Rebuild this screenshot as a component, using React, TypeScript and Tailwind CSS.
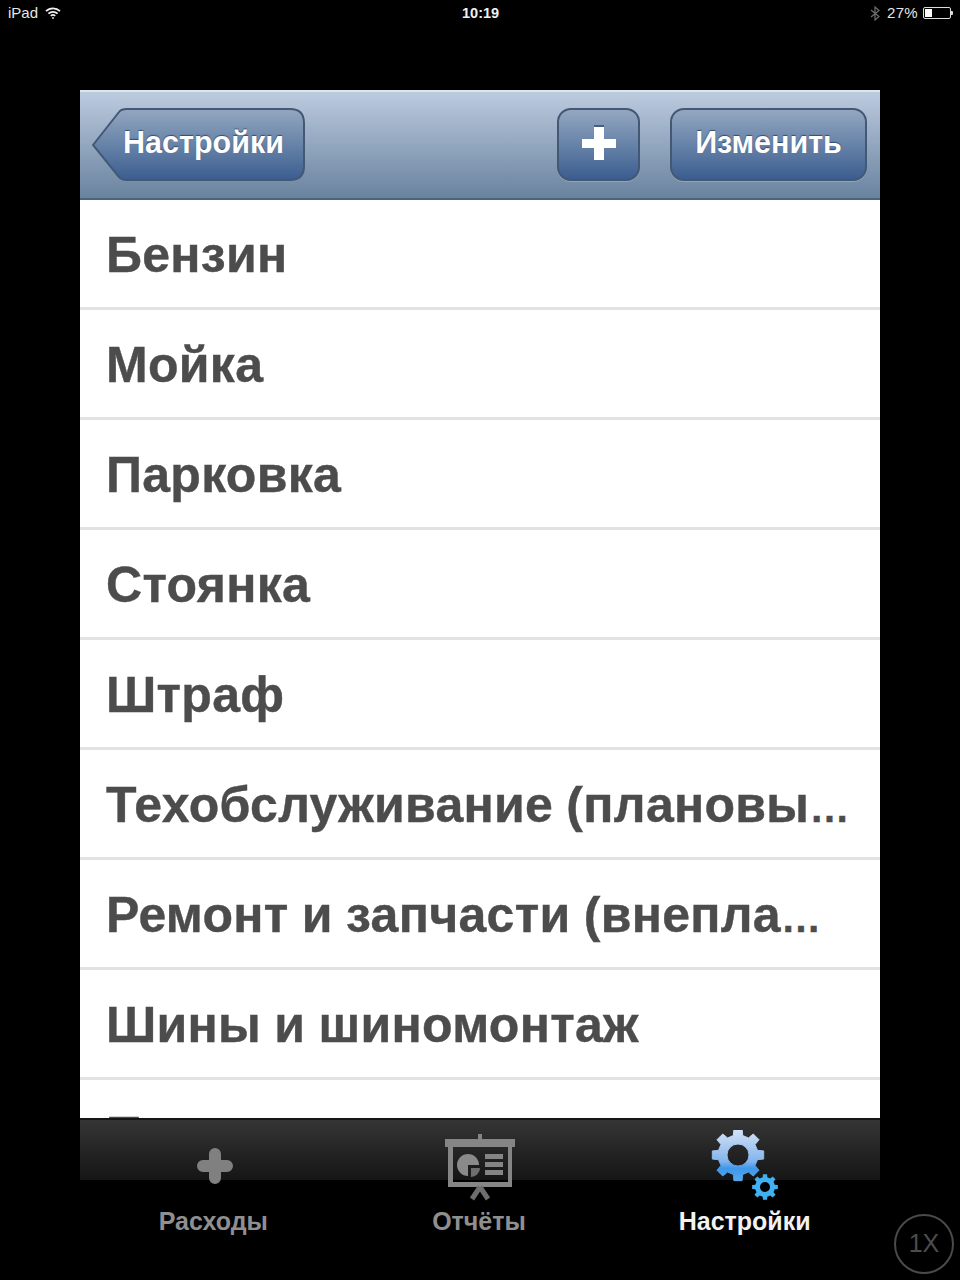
const rows = [
  "Бензин",
  "Мойка",
  "Парковка",
  "Стоянка",
  "Штраф",
  "Техобслуживание (плановы…",
  "Ремонт и запчасти (внепла…",
  "Шины и шиномонтаж",
  "Прочее",
];

// builds a cog outline, hole is cut with evenodd
function gearPath(cx: number, cy: number, outer: number, inner: number, hole: number, teeth: number) {
  const pts: string[] = [];
  const step = (Math.PI * 2) / teeth;
  for (let i = 0; i < teeth; i++) {
    const a = i * step - Math.PI / 2;
    const w = step * 0.2;
    const w2 = step * 0.3;
    const p = (r: number, t: number) => `${(cx + r * Math.cos(t)).toFixed(2)} ${(cy + r * Math.sin(t)).toFixed(2)}`;
    pts.push(p(inner, a - w2), p(outer, a - w), p(outer, a + w), p(inner, a + w2));
  }
  const ring = `M${cx - hole} ${cy}a${hole} ${hole} 0 1 0 ${hole * 2} 0a${hole} ${hole} 0 1 0 ${-hole * 2} 0Z`;
  return `M${pts.join("L")}Z${ring}`;
}

function StatusBar() {
  return (
    <div className="relative flex h-[26px] items-center justify-between pl-[8px] pr-[7px] text-[15px] text-[#e6e6e6]">
      <div className="flex items-center gap-[7px]">
        <span>iPad</span>
        <svg width="16" height="12" viewBox="0 0 16 12" fill="none" stroke="#f0f0f0" strokeWidth="1.7">
          <path d="M1 4.2a10 10 0 0 1 14 0" />
          <path d="M3.4 6.7a6.6 6.6 0 0 1 9.2 0" />
          <path d="M5.8 9a3.2 3.2 0 0 1 4.4 0" />
          <circle cx="8" cy="11" r="0.9" fill="#f0f0f0" stroke="none" />
        </svg>
      </div>
      <span className="absolute left-[462px] top-[4px] text-[14.5px] font-bold leading-[18px] text-[#f0f0f0]">10:19</span>
      <div className="flex items-center">
        <svg className="mr-[7px]" width="10" height="15" viewBox="0 0 10 15" fill="none" stroke="#6e6e6e" strokeWidth="1.2">
          <path d="M1 4l8 6.5-4 3.5V1l4 3.5L1 11" />
        </svg>
        <span className="mr-[5px] tracking-[0.3px]">27%</span>
        <div className="flex items-center">
          <div className="h-[12px] w-[28px] rounded-[2px] border border-[#dcdcdc] p-[1px]">
            <div className="h-full w-[7px] bg-white" />
          </div>
          <div className="h-[4px] w-[2px] rounded-r-[1px] bg-[#dcdcdc]" />
        </div>
      </div>
    </div>
  );
}

function BackButton() {
  return (
    <div className="relative flex h-[74px] w-[214px] items-center justify-end pb-[5px] pr-[22px]">
      <svg className="absolute inset-0" width="214" height="74" viewBox="0 0 214 74">
        <defs>
          <linearGradient id="btnBack" x1="0" y1="0" x2="0" y2="1">
            <stop offset="0" stopColor="#94a7c1" />
            <stop offset="0.5" stopColor="#6783a8" />
            <stop offset="1" stopColor="#3b5d8f" />
          </linearGradient>
        </defs>
        <path
          d="M1 37L27 4Q29 1 35 1H198Q212 1 212 15V58Q212 72 198 72H35Q29 72 27 69Z"
          fill="url(#btnBack)"
          stroke="#435874"
          strokeWidth="2"
        />
      </svg>
      <span className="relative text-[30.5px] font-bold leading-none text-white [text-shadow:0_-1px_1px_rgba(30,50,80,0.7)]">
        Настройки
      </span>
    </div>
  );
}

function NavButton({ className, children }: { className: string; children: React.ReactNode }) {
  return (
    <div
      className={`flex h-[73px] items-center justify-center rounded-[14px] border-2 border-[#435874] bg-gradient-to-b from-[#94a7c1] via-[#6783a8] to-[#3b5d8f] shadow-[0_1px_0_rgba(255,255,255,0.2)] ${className}`}
    >
      {children}
    </div>
  );
}

function PlusIcon() {
  return (
    <svg width="44" height="44" viewBox="0 0 44 44">
      <path d="M5 17h12V5h10v12h12v9H27v12H17V26H5Z" fill="#fff" />
      <path d="M17 3h10v2H17Z" fill="#34496a" opacity="0.7" />
    </svg>
  );
}

function Row({ label }: { label: string }) {
  const cut = label.endsWith("…");
  return (
    <div className="flex h-[110px] shrink-0 items-center border-b-[3px] border-[#e2e2e2] pl-[26px]">
      <span className="whitespace-nowrap pt-[3px] text-[50px] font-bold leading-[60px] tracking-[0.3px] text-[#4c4c4c] [word-spacing:-1px] [-webkit-text-stroke:0.4px_#4c4c4c]">
        {cut ? label.slice(0, -1) : label}
        {cut && <span className="text-[40px] leading-none">…</span>}
      </span>
    </div>
  );
}

function ExpensesIcon() {
  return (
    <svg width="36" height="36" viewBox="0 0 36 36">
      <path
        d="M12 6a6 6 0 0 1 12 0v6h6a6 6 0 0 1 0 12h-6v6a6 6 0 0 1-12 0v-6H6a6 6 0 0 1 0-12h6Z"
        fill="#808080"
      />
    </svg>
  );
}

function ReportsIcon() {
  return (
    <svg width="72" height="68" viewBox="0 0 72 68" fill="#858585">
      <rect x="34" y="0" width="4" height="6" />
      <rect x="1" y="5" width="70" height="8" />
      <path fillRule="evenodd" d="M4 13h64v40H4ZM9 13v35h55V13Z" />
      <circle cx="24" cy="31" r="11" fill="#8a8a8a" />
      <path d="M24 31h12a12 12 0 0 1-12 12Z" fill="#1c1c1c" />
      <path d="M27 34h9a9 9 0 0 1-9 9Z" fill="#6e6e6e" />
      <rect x="41" y="20" width="18" height="5" />
      <rect x="41" y="28" width="18" height="5" />
      <rect x="41" y="36" width="18" height="5" />
      <path d="M36 53l-8 12M36 53l8 12" stroke="#6e6e6e" strokeWidth="5" fill="none" />
    </svg>
  );
}

function SettingsIcon() {
  return (
    <svg width="72" height="72" viewBox="0 0 72 72">
      <defs>
        <linearGradient id="gearBig" x1="0" y1="0" x2="0" y2="1">
          <stop offset="0" stopColor="#d4e3f7" />
          <stop offset="0.62" stopColor="#84b4ec" />
          <stop offset="0.76" stopColor="#3f97ea" />
          <stop offset="1" stopColor="#58a8ec" />
        </linearGradient>
      </defs>
      <path d={gearPath(27, 25, 26, 20, 11, 8)} fill="url(#gearBig)" fillRule="evenodd" stroke="url(#gearBig)" strokeLinejoin="round" strokeWidth="1" />
      <path d={gearPath(54, 57, 13, 10, 5, 8)} fill="#3fb0f2" fillRule="evenodd" />
    </svg>
  );
}

function TabBar() {
  return (
    <div className="relative h-[162px] shrink-0">
      <div className="absolute inset-x-0 top-0 h-[62px] border-t-2 border-[#151515] bg-gradient-to-b from-[#353535] to-[#161616]" />
      <div className="relative grid h-full grid-cols-3 text-[25px] font-bold">
        <div className="flex flex-col items-center">
          <div className="flex h-[84px] items-end pb-[18px] pl-[4px]">
            <ExpensesIcon />
          </div>
          <span className="mt-[5px] leading-[28px] text-[#8f8f8f]">Расходы</span>
        </div>
        <div className="flex flex-col items-center">
          <div className="flex h-[84px] items-end">
            <ReportsIcon />
          </div>
          <span className="mt-[5px] pr-[2px] leading-[28px] text-[#8f8f8f]">Отчёты</span>
        </div>
        <div className="flex flex-col items-center">
          <div className="flex h-[84px] items-end">
            <SettingsIcon />
          </div>
          <span className="mt-[5px] pr-[4px] leading-[28px] text-[#f2f2f2]">Настройки</span>
        </div>
      </div>
    </div>
  );
}

export default function App() {
  return (
    <div className="relative flex h-[1280px] w-[960px] flex-col overflow-hidden bg-black [font-family:'Liberation_Sans',Arial,sans-serif]">
      <StatusBar />
      <div className="mx-[80px] mt-[64px] flex w-[800px] flex-col">
        <div className="flex h-[110px] items-center justify-between border-t-2 border-b-2 border-t-[#dfe5ee] border-b-[#486482] bg-gradient-to-b from-[#bdcbdf] to-[#69839f] pl-[12px] pr-[13px]">
          <BackButton />
          <div className="flex items-center gap-[30px] pb-[2px]">
            <NavButton className="w-[83px]">
              <PlusIcon />
            </NavButton>
            <NavButton className="w-[197px]">
              <span className="pb-[3px] text-[30.5px] font-bold leading-none text-white [text-shadow:0_-1px_1px_rgba(30,50,80,0.7)]">
                Изменить
              </span>
            </NavButton>
          </div>
        </div>
        <div className="flex h-[918px] flex-col overflow-hidden bg-white">
          {rows.map((r) => (
            <Row key={r} label={r} />
          ))}
        </div>
        <TabBar />
      </div>
      <div className="absolute left-[894px] top-[1214px] flex h-[60px] w-[60px] items-center justify-center rounded-full border-2 border-[#4a4a4a] text-[25px] text-[#4c4c4c]">
        1X
      </div>
    </div>
  );
}
